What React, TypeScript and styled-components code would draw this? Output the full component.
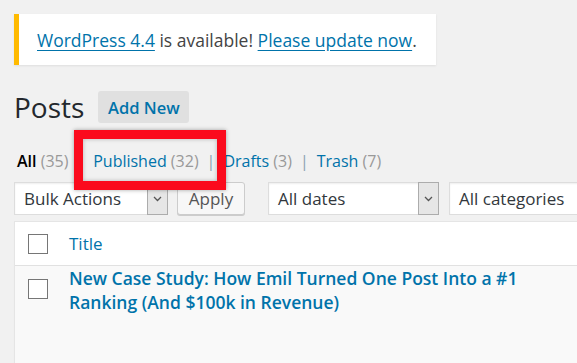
import React from 'react'
import styled, { createGlobalStyle } from 'styled-components'

const GlobalStyle = createGlobalStyle`
  html, body {
    margin: 0;
    padding: 0;
    background: #f1f1f1;
  }
  body {
    font-family: "Open Sans", "Noto Sans", sans-serif;
    color: #444;
  }
`

const Page = styled.div`
  width: 577px;
  height: 363px;
  overflow: hidden;
  padding: 14px 0 0 14px;
  box-sizing: border-box;
`

const Notice = styled.div`
  width: 422px;
  height: 51px;
  box-sizing: border-box;
  background: #fff;
  border-left: 5px solid #ffba00;
  box-shadow: 0 1px 2px rgba(0, 0, 0, 0.08);
  display: flex;
  align-items: center;
  padding-left: 18px;
  font-size: 17.5px;
  color: #444;
`

const NoticeLink = styled.a`
  color: #0073aa;
  text-decoration: underline;
  text-underline-offset: 3px;
`

const TitleRow = styled.div`
  display: flex;
  align-items: center;
  gap: 14px;
  height: 32px;
  margin-top: 26px;
`

const Heading = styled.h1`
  margin: 0;
  font-size: 28px;
  font-weight: 400;
  line-height: 32px;
  color: #23282d;
`

const AddNew = styled.a`
  display: flex;
  align-items: center;
  justify-content: center;
  width: 91px;
  height: 32px;
  background: #e0e0e0;
  border-radius: 3px;
  color: #0073aa;
  font-size: 16.5px;
  font-weight: 600;
`

const Views = styled.ul`
  display: flex;
  align-items: center;
  list-style: none;
  margin: 27px 0 0 3px;
  padding: 0;
  height: 22px;
  font-size: 16px;
  line-height: 22px;
`

const ViewItem = styled.li`
  position: relative;
  display: flex;
  align-items: center;
`

const ViewLink = styled.a<{ $current?: boolean }>`
  color: ${p => (p.$current ? '#000' : '#0073aa')};
  font-weight: ${p => (p.$current ? 600 : 400)};
  white-space: nowrap;
`

const Count = styled.span`
  color: #999;
  font-weight: 400;
`

const Sep = styled.span`
  color: #8aa0b0;
  margin: 0 8px;
`

const Highlight = styled.div`
  position: absolute;
  left: -19px;
  top: -20px;
  width: 152px;
  height: 60px;
  box-sizing: border-box;
  border: 9px solid #fb0a1c;
  box-shadow: 0 0 4px rgba(0, 0, 0, 0.35), inset 0 0 4px rgba(0, 0, 0, 0.25);
  z-index: 5;
  pointer-events: none;
`

const Toolbar = styled.div`
  display: flex;
  align-items: center;
  margin-top: 10px;
  height: 33px;
`

const Select = styled.div<{ $width: number; $gap: number }>`
  display: flex;
  align-items: center;
  justify-content: space-between;
  width: ${p => p.$width}px;
  flex: none;
  height: 33px;
  box-sizing: border-box;
  margin-right: ${p => p.$gap}px;
  background: #fff;
  border: 1px solid #ddd;
  box-shadow: inset 0 1px 2px rgba(0, 0, 0, 0.07);
  color: #32373c;
  font-size: 17px;
  padding-left: 9px;
`

const Arrow = styled.span`
  display: flex;
  align-items: center;
  justify-content: center;
  width: 21px;
  height: 33px;
  margin: -1px -1px -1px 0;
  box-sizing: border-box;
  background: #e6e6e6;
  border: 1px solid #acacac;
`

const Button = styled.button`
  width: 68px;
  height: 33px;
  flex: none;
  margin-right: 23px;
  background: #f7f7f7;
  border: 1px solid #ccc;
  border-radius: 3px;
  box-shadow: 0 1px 0 #ccc;
  color: #555;
  font-family: inherit;
  font-size: 17px;
  padding: 0;
`

const Table = styled.div`
  margin-top: 6px;
  width: 700px;
  border: 1px solid #e5e5e5;
  box-shadow: 0 1px 1px rgba(0, 0, 0, 0.04);
`

const HeadRow = styled.div`
  display: flex;
  align-items: center;
  height: 43px;
  background: #fff;
  border-bottom: 1px solid #e1e1e1;
`

const BodyRow = styled.div`
  display: flex;
  align-items: flex-start;
  height: 110px;
  background: #f9f9f9;
`

const CheckCell = styled.div<{ $top?: number }>`
  width: 54px;
  flex: none;
  padding: ${p => p.$top ?? 0}px 0 0 13px;
  box-sizing: border-box;
`

const Box = styled.span`
  display: block;
  width: 20px;
  height: 20px;
  box-sizing: border-box;
  border: 1px solid #767676;
  background: #fff;
`

const HeadTitle = styled.a`
  color: #0073aa;
  font-size: 17px;
`

const PostTitle = styled.a`
  display: block;
  width: 470px;
  color: #0073aa;
  font-size: 17.5px;
  font-weight: 600;
  line-height: 24px;
  padding: 0;
`

const Chevron = () => (
  <svg width="9" height="6" viewBox="0 0 9 6">
    <path d="M1 1l3.5 3.5L8 1" fill="none" stroke="#555" strokeWidth="1.3" />
  </svg>
)

export default function App() {
  return (
    <Page>
      <GlobalStyle />
      <Notice>
        <span>
          <NoticeLink>WordPress 4.4</NoticeLink> is available! <NoticeLink>Please update now</NoticeLink>.
        </span>
      </Notice>

      <TitleRow>
        <Heading>Posts</Heading>
        <AddNew>Add New</AddNew>
      </TitleRow>

      <Views>
        <ViewItem>
          <ViewLink $current>
            All <Count>(35)</Count>
          </ViewLink>
          <Sep>|</Sep>
        </ViewItem>
        <ViewItem>
          <ViewLink>
            Published <Count>(32)</Count>
          </ViewLink>
          <Highlight />
          <Sep>|</Sep>
        </ViewItem>
        <ViewItem>
          <ViewLink>
            Drafts <Count>(3)</Count>
          </ViewLink>
          <Sep>|</Sep>
        </ViewItem>
        <ViewItem>
          <ViewLink>
            Trash <Count>(7)</Count>
          </ViewLink>
        </ViewItem>
      </Views>

      <Toolbar>
        <Select $width={154} $gap={9}>
          Bulk Actions
          <Arrow>
            <Chevron />
          </Arrow>
        </Select>
        <Button>Apply</Button>
        <Select $width={171} $gap={10}>
          All dates
          <Arrow>
            <Chevron />
          </Arrow>
        </Select>
        <Select $width={180} $gap={0}>
          All categories
          <Arrow>
            <Chevron />
          </Arrow>
        </Select>
      </Toolbar>

      <Table>
        <HeadRow>
          <CheckCell>
            <Box />
          </CheckCell>
          <HeadTitle>Title</HeadTitle>
        </HeadRow>
        <BodyRow>
          <CheckCell $top={13}>
            <Box />
          </CheckCell>
          <PostTitle>New Case Study: How Emil Turned One Post Into a #1 Ranking (And $100k in Revenue)</PostTitle>
        </BodyRow>
      </Table>
    </Page>
  )
}
